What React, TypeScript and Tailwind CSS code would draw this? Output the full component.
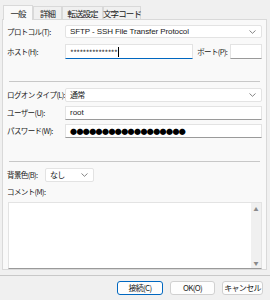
import React from "react";

const font = { fontFamily: '"Noto Sans CJK JP", "Noto Sans", sans-serif' };
const latin = { fontFamily: '"Liberation Sans", "Noto Sans CJK JP", sans-serif' };

const Chevron = () => (
	<svg width="7" height="4" viewBox="0 0 7 4" className="shrink-0">
		<path d="M0.5 0.5 L3.5 3.3 L6.5 0.5" fill="none" stroke="#666" strokeWidth="0.8" />
	</svg>
);

const Field = ({ children, className = "", focused = false }: { children?: React.ReactNode; className?: string; focused?: boolean }) => (
	<div
		className={`flex items-center bg-white border border-[#e3e3e3] px-[4px] overflow-hidden ${
			focused ? "border-b-[#0067c0] border-b-[1.5px]" : "border-b-[#9a9a9a]"
		} ${className}`}
	>
		{children}
	</div>
);

const Select = ({ value, className = "", latinText = false }: { value: string; className?: string; latinText?: boolean }) => (
	<div className={`flex items-center justify-between bg-white border border-[#e3e3e3] rounded-[2px] pl-[4px] pr-[5px] ${className}`}>
		<span
			className={`leading-none text-[#1a1a1a] whitespace-nowrap ${latinText ? "text-[8px] tracking-[-0.1px]" : "text-[8px] tracking-[-0.8px]"}`}
			style={latinText ? latin : undefined}
		>
			{value}
		</span>
		<Chevron />
	</div>
);

const Label = ({ children, className = "" }: { children: React.ReactNode; className?: string }) => (
	<span className={`text-[7.5px] leading-none tracking-[-0.6px] text-[#1a1a1a] whitespace-nowrap shrink-0 ${className}`}>{children}</span>
);

const Row = ({ label, children, className = "" }: { label: string; children: React.ReactNode; className?: string }) => (
	<div className={`flex items-center ${className}`}>
		<Label className="w-[58px]">{label}</Label>
		{children}
	</div>
);

const Tab = ({ label, active = false }: { label: string; active?: boolean }) => (
	<div
		className={`flex items-center justify-center border border-[#d9d9d9] border-b-0 text-[8.5px] leading-none tracking-[-0.9px] whitespace-nowrap text-[#1a1a1a] ${
			active ? "bg-[#f9f9f9] h-[15px] relative top-[1px] z-10" : "bg-[#f0f0f0] h-[13px]"
		}`}
	>
		{label}
	</div>
);

const Button = ({ label, primary = false, className = "" }: { label: string; primary?: boolean; className?: string }) => (
	<button
		className={`h-[14px] bg-[#fdfdfd] border rounded-[3px] text-[8px] leading-none tracking-[-0.7px] whitespace-nowrap text-[#1a1a1a] ${
			primary ? "border-[#0067c0]" : "border-[#d0d0d0]"
		} ${className}`}
	>
		{label}
	</button>
);

export default function App() {
	return (
		<div className="w-[270px] h-[300px] bg-[#f0f0f0] flex flex-col overflow-hidden" style={font}>
			{/* tabs */}
			<div className="flex items-end h-[19px] pl-[3px]">
				<div className="w-[30px]"><Tab label="一般" active /></div>
				<div className="w-[29px]"><Tab label="詳細" /></div>
				<div className="w-[41px]"><Tab label="転送設定" /></div>
				<div className="w-[38px]"><Tab label="文字コード" /></div>
			</div>

			{/* panel */}
			<div className="ml-[2px] w-[265px] h-[251px] bg-[#f9f9f9] border border-[#d9d9d9] flex flex-col px-[4px]">
				<Row label="プロトコル(T):" className="mt-[5px]">
					<Select latinText value="SFTP - SSH File Transfer Protocol" className="w-[198px] h-[13px]" />
				</Row>
				<Row label="ホスト(H):" className="mt-[6px]">
					<Field focused className="w-[129px] h-[15px]">
						<span className="text-[8px] leading-none tracking-[-0.6px] text-[#333] mt-[2px]">***************</span>
						<span className="w-px h-[10px] bg-black ml-px" />
					</Field>
					<Label className="ml-[4px] w-[33px]">ポート(P):</Label>
					<Field className="w-[32px] h-[15px]" />
				</Row>

				<div className="mt-[22px] mx-[2px] h-px bg-[#c8c8c8]" />

				<Row label="ログオン タイプ(L):" className="mt-[6px]">
					<Select value="通常" className="w-[198px] h-[14px]" />
				</Row>
				<Row label="ユーザー(U):" className="mt-[4px]">
					<Field className="w-[198px] h-[14px]">
						<span className="text-[8px] leading-none text-[#1a1a1a]" style={latin}>root</span>
					</Field>
				</Row>
				<Row label="パスワード(W):" className="mt-[4px]">
					<Field className="w-[198px] h-[14px]">
						<span className="text-[7px] leading-none tracking-[-0.6px] text-black whitespace-nowrap">●●●●●●●●●●●●●●●●●●</span>
					</Field>
				</Row>

				<div className="mt-[23px] mx-[2px] h-px bg-[#c8c8c8]" />

				<div className="flex items-center mt-[6px]">
					<Label className="w-[38px]">背景色(B):</Label>
					<Select value="なし" className="w-[49px] h-[14px]" />
				</div>
				<Label className="mt-[6px]">コメント(M):</Label>

				<div className="mt-[6px] ml-px w-[254px] h-[67px] bg-white border border-[#e3e3e3] border-b-[#9a9a9a] flex justify-end">
					<div className="w-[10px] h-full bg-[#f0f0f0] flex flex-col items-center justify-between py-[3px]">
						<span className="text-[5px] leading-none text-[#8a8a8a]">▲</span>
						<span className="text-[5px] leading-none text-[#8a8a8a]">▼</span>
					</div>
				</div>
			</div>

			{/* bottom */}
			<div className="mt-[5px] h-px bg-[#c8c8c8]" />
			<div className="flex justify-end gap-[7px] pr-[7px] mt-[5px]">
				<Button label="接続(C)" primary className="w-[46px]" />
				<Button label="OK(O)" className="w-[45px]" />
				<Button label="キャンセル" className="w-[41px]" />
			</div>
		</div>
	);
}
